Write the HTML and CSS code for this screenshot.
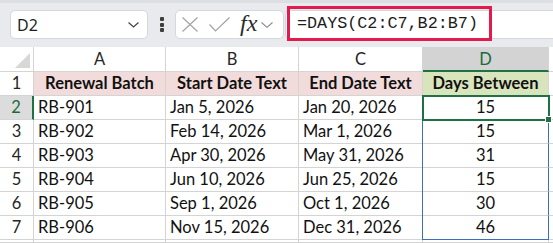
FILE: index.html
```html
<!DOCTYPE html>
<html lang="en">
<head>
  <meta charset="UTF-8">
  <meta name="viewport" content="width=device-width, initial-scale=1.0">
  <title>DAYS formula</title>
  <link rel="stylesheet" href="styles.css">
</head>
<body>
  <div class="toolbar">
    <div class="namebox">
      <span>D2</span>
      <svg width="11" height="6" viewBox="0 0 11 6"><path d="M0.5 0.5 L5.5 5 L10.5 0.5" fill="none" stroke="#444" stroke-width="1.2"/></svg>
    </div>
    <div class="dots"><i></i><i></i><i></i></div>
    <div class="fxbox">
      <svg width="16" height="15" viewBox="0 0 16 15"><path d="M0.5 0.5 L15.5 14.5 M15.5 0.5 L0.5 14.5" stroke="#a3a3a3" stroke-width="1.2" fill="none"/></svg>
      <svg width="21" height="15" viewBox="0 0 21 15"><path d="M0.5 7.5 L6.5 14 L20.5 0.5" stroke="#a3a3a3" stroke-width="1.2" fill="none"/></svg>
      <span class="fx">fx</span>
      <svg width="12" height="6" viewBox="0 0 12 6"><path d="M0.5 0.5 L6 5.3 L11.5 0.5" fill="none" stroke="#8a8a8a" stroke-width="1.1"/></svg>
    </div>
    <div class="formula">
      <span class="highlight">=DAYS(C2:C7,B2:B7)</span>
    </div>
  </div>

  <div class="sheet">
    <div class="corner"><span class="tri"></span></div>
    <div class="colhdr">A</div>
    <div class="colhdr">B</div>
    <div class="colhdr">C</div>
    <div class="colhdr sel">D</div>
    <div class="colhdr"></div>

    <div class="rowhdr">1</div>
    <div class="cell head">Renewal Batch</div>
    <div class="cell head">Start Date Text</div>
    <div class="cell head">End Date Text</div>
    <div class="cell head green">Days Between</div>
    <div class="cell"></div>

    <div class="rowhdr sel">2</div>
    <div class="cell">RB-901</div>
    <div class="cell">Jan 5, 2026</div>
    <div class="cell">Jan 20, 2026</div>
    <div class="cell num active">15<span class="handle"></span></div>
    <div class="cell"></div>

    <div class="rowhdr">3</div>
    <div class="cell">RB-902</div>
    <div class="cell">Feb 14, 2026</div>
    <div class="cell">Mar 1, 2026</div>
    <div class="cell num range">15</div>
    <div class="cell"></div>

    <div class="rowhdr">4</div>
    <div class="cell">RB-903</div>
    <div class="cell">Apr 30, 2026</div>
    <div class="cell">May 31, 2026</div>
    <div class="cell num range">31</div>
    <div class="cell"></div>

    <div class="rowhdr">5</div>
    <div class="cell">RB-904</div>
    <div class="cell">Jun 10, 2026</div>
    <div class="cell">Jun 25, 2026</div>
    <div class="cell num range">15</div>
    <div class="cell"></div>

    <div class="rowhdr">6</div>
    <div class="cell">RB-905</div>
    <div class="cell">Sep 1, 2026</div>
    <div class="cell">Oct 1, 2026</div>
    <div class="cell num range">30</div>
    <div class="cell"></div>

    <div class="rowhdr">7</div>
    <div class="cell">RB-906</div>
    <div class="cell">Nov 15, 2026</div>
    <div class="cell">Dec 31, 2026</div>
    <div class="cell num range last">46</div>
    <div class="cell"></div>

    <div class="rowhdr"></div>
    <div class="cell"></div>
    <div class="cell"></div>
    <div class="cell"></div>
    <div class="cell"></div>
    <div class="cell"></div>
  </div>
</body>
</html>
```

FILE: styles.css
```css
body { margin: 0; width: 553px; height: 243px; overflow: hidden; background: #fff; font-family: Lato, "Open Sans", sans-serif; color: #111; }

/* formula bar */
.toolbar { box-sizing: border-box; height: 47px; background: #e9eaed; border-top: 3px solid #dcdee2; padding: 7px 0 0 10px; display: flex; align-items: flex-start; }
.namebox { box-sizing: border-box; width: 138px; height: 29px; background: #fff; border: 1px solid #d6d7da; border-radius: 5px; display: flex; align-items: center; justify-content: space-between; padding: 0 8px 0 6px; font-family: "Noto Sans", sans-serif; font-size: 16px; color: #1e1e1e; }
.namebox svg { margin-top: 1px; }
.dots { width: 27px; height: 29px; display: flex; flex-direction: column; align-items: center; justify-content: center; gap: 1.5px; }
.dots i { display: block; width: 4px; height: 4px; border-radius: 1px; background: #3e3e3e; }
.fxbox { box-sizing: border-box; width: 109px; height: 29px; background: #fff; border: 1px solid #d6d7da; border-radius: 5px; display: flex; align-items: center; padding-left: 6px; }
.fxbox svg:nth-child(2) { margin-left: 11px; }
.fx { margin-left: 10px; font-family: "Liberation Serif", serif; font-style: italic; font-size: 24px; color: #2a2a2a; line-height: 1; margin-top: -3px; }
.fxbox svg:last-child { margin-left: 4px; margin-top: 1px; }
.formula { flex: 1; height: 29px; margin-left: 1px; background: #fff; border: 1px solid #d6d7da; border-right: none; border-radius: 5px 0 0 5px; box-sizing: border-box; }
.highlight { box-sizing: border-box; display: inline-flex; align-items: center; width: 205px; height: 35px; margin: -5px 0 0 1px; padding-left: 7px; border: 3px solid #e31b4c; font-family: "Liberation Mono", monospace; font-size: 16.75px; color: #1c1c1c; }

/* grid */
.sheet { display: grid; grid-template-columns: 34px 132px 133px 124px 126px 1fr; grid-template-rows: 25px repeat(7, 24px) 3px; }
.sheet > div { border-right: 1px solid #d4d4d4; border-bottom: 1px solid #d4d4d4; box-sizing: border-box; }
.corner { position: relative; background: #fff; }
.tri { position: absolute; right: 3px; bottom: 3px; width: 0; height: 0; border-left: 15px solid transparent; border-bottom: 15px solid #d7d7d7; }
.colhdr { background: #fff; text-align: center; font-size: 16.5px; line-height: 24px; color: #262626; }
.colhdr.sel { background: #d3d3d3; color: #1a6b3c; border-bottom: 2px solid #1e7145 !important; }
.rowhdr { background: #fff; text-align: center; font-size: 16.5px; line-height: 23px; color: #262626; }
.rowhdr.sel { background: #dcdcdc; color: #1a6b3c; border-right: 2px solid #1e7145 !important; }
.cell { font-size: 16.5px; line-height: 23px; padding-left: 4px; white-space: nowrap; overflow: visible; position: relative; }
.head { background: #f2dcdb; font-weight: bold; text-align: center; padding-left: 0; }
.head.green { background: #d8e4bc; }
.num { text-align: center; padding-left: 0; }
.range { border-right-color: #3d6cc4 !important; box-shadow: -1px 0 0 #3d6cc4; }
.range.last { border-bottom-color: #3d6cc4 !important; }
.active { outline: 2px solid #1e7145; outline-offset: -1px; z-index: 1; }
.handle { position: absolute; right: -4px; bottom: -4px; width: 5px; height: 5px; background: #1e7145; border: 1px solid #fff; }
```
